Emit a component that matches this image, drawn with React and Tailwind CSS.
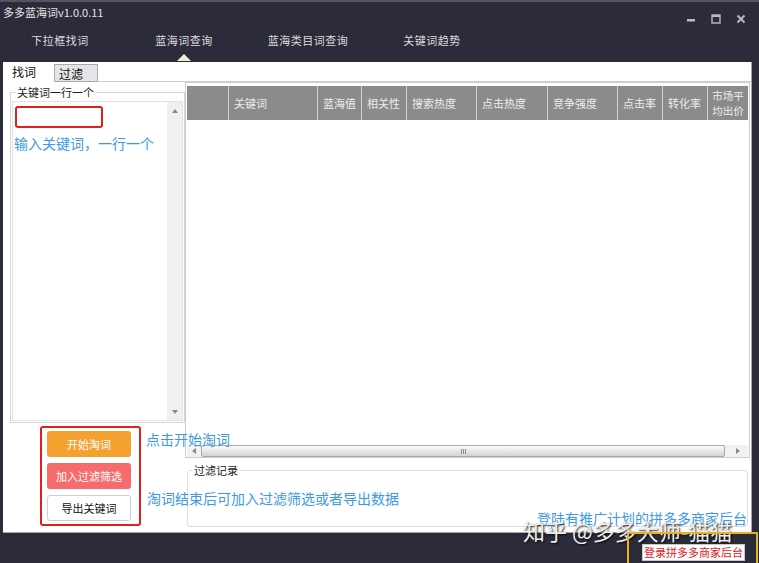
const navItems = ["下拉框找词", "蓝海词查询", "蓝海类目词查询", "关键词趋势"];

const tableColumns = [
  { label: "", width: "w-[42px]" },
  { label: "关键词", width: "w-[89px]" },
  { label: "蓝海值", width: "w-[44px]" },
  { label: "相关性", width: "w-[45px]" },
  { label: "搜索热度", width: "w-[70px]" },
  { label: "点击热度", width: "w-[71px]" },
  { label: "竞争强度", width: "w-[70px]" },
  { label: "点击率", width: "w-[45px]" },
  { label: "转化率", width: "w-[45px]" },
];

const Arrow = ({ dir }) => {
  const points = {
    up: "0,4 3,0 6,4",
    down: "0,0 3,4 6,0",
    left: "4,0 0,3 4,6",
    right: "0,0 4,3 0,6",
  }[dir];
  const size = dir === "up" || dir === "down" ? { w: 6, h: 4 } : { w: 4, h: 6 };

  return (
    <svg width={size.w} height={size.h} viewBox={`0 0 ${size.w} ${size.h}`}>
      <polygon points={points} fill="#8a8a8a" />
    </svg>
  );
};

const TitleBar = () => (
  <div className="flex h-[24px] justify-between">
    <div className="pl-[3px] pt-[3px] text-[11px] leading-[14px] text-[#e4e4e4]">
      多多蓝海词v1.0.0.11
    </div>

    <div className="mt-[12px] flex gap-[15px] pr-[13px]">
      <svg width="10" height="10" viewBox="0 0 10 10">
        <rect x="1" y="5" width="8" height="2.5" fill="#b9b9c2" />
      </svg>
      <svg width="10" height="10" viewBox="0 0 10 10">
        <rect x="1" y="1" width="8" height="8" fill="none" stroke="#b9b9c2" strokeWidth="1.4" />
        <rect x="1" y="1" width="8" height="2" fill="#b9b9c2" />
      </svg>
      <svg width="10" height="10" viewBox="0 0 10 10">
        <path d="M1.5 1.5 L8.5 8.5 M8.5 1.5 L1.5 8.5" stroke="#b9b9c2" strokeWidth="2" />
      </svg>
    </div>
  </div>
);

const NavBar = () => (
  <div className="ml-[-2px] flex h-[36px]">
    {navItems.map((item, index) => (
      <div key={item} className="flex w-[124px] flex-col items-center pt-[6px]">
        <span className="text-[11px] leading-[16px] tracking-[0.5px] text-[#dcdcdc]">
          {item}
        </span>
        {index === 1 && (
          <svg className="mt-[6px]" width="14" height="7" viewBox="0 0 14 7">
            <polygon points="0,7 7,0 14,7" fill="#f3edd3" />
          </svg>
        )}
      </div>
    ))}
  </div>
);

const KeywordPanel = () => (
  <div className="flex w-[182px] shrink-0 flex-col">
    <fieldset className="ml-[7px] mt-[3px] w-[175px] border border-[#d6d6d6] px-[1px] pb-[1px]">
      <legend className="ml-[4px] px-[1px] text-[11px] leading-[14px] text-[#222]">
        关键词一行一个
      </legend>

      <div className="mt-[2px] flex h-[320px] w-[171px] border border-[#e2e2e2] bg-white">
        <div className="flex-1 pl-[1px]">
          <div className="ml-[1px] mt-[4px] h-[22px] w-[88px] rounded-[3px] border-2 border-[#e0201c]" />
          <div className="mt-[5px] whitespace-nowrap text-[14px] leading-[20px] text-[#3d9ae2]">
            输入关键词，一行一个
          </div>
        </div>

        <div className="flex w-[15px] flex-col items-center justify-between bg-[#f0f0f0] pb-[6px] pt-[7px]">
          <Arrow dir="up" />
          <Arrow dir="down" />
        </div>
      </div>
    </fieldset>

    <div className="ml-[37px] mt-[3px] flex h-[100px] w-[101px] flex-col gap-[6px] rounded-[3px] border-2 border-[#e0201c] pl-[5px] pt-[3px]">
      <button className="h-[26px] w-[84px] rounded-[3px] bg-[#f4a12f] text-[11px] text-white">
        开始淘词
      </button>
      <button className="h-[26px] w-[84px] rounded-[3px] bg-[#f66c6c] text-[11px] text-white">
        加入过滤筛选
      </button>
      <button className="h-[26px] w-[84px] rounded-[3px] border border-[#cfcfcf] bg-white text-[11px] text-[#111]">
        导出关键词
      </button>
    </div>
  </div>
);

const ResultTable = () => (
  <div className="flex h-[376px] w-[565px] flex-col border border-[#cdcdcd] pl-[1px] pt-[3px]">
    <div className="flex h-[34px] w-[561px] bg-[#8b8b8b] text-[11px] text-[#ededed]">
      {tableColumns.map((col, index) => (
        <div
          key={index}
          className={`${col.width} flex shrink-0 items-center border-r border-[#d2d2d2] pl-[5px]`}
        >
          {col.label}
        </div>
      ))}
      <div className="flex w-[40px] shrink-0 flex-col items-center justify-center text-[10.5px] leading-[15px]">
        <span>市场平</span>
        <span>均出价</span>
      </div>
    </div>

    <div className="flex-1" />

    <div className="flex h-[12px] w-[561px] bg-[#f2f2f2]">
      <div className="flex w-[14px] items-center justify-center">
        <Arrow dir="left" />
      </div>
      <div className="flex w-[524px] items-center justify-center gap-[1px] rounded-[2px] border border-[#a9a9a9] bg-linear-to-b from-[#fbfbfb] to-[#d3d3d3]">
        <span className="h-[5px] w-[1px] bg-[#8a8a8a]" />
        <span className="h-[5px] w-[1px] bg-[#8a8a8a]" />
        <span className="h-[5px] w-[1px] bg-[#8a8a8a]" />
      </div>
      <div className="flex flex-1 items-center justify-center pl-[2px]">
        <Arrow dir="right" />
      </div>
    </div>
  </div>
);

const FilterRecord = () => (
  <fieldset className="ml-[2px] mt-[5px] h-[64px] w-[561px] rounded-[3px] border border-[#dedede]">
    <legend className="ml-[5px] px-[1px] text-[11px] leading-[14px] text-[#222]">过滤记录</legend>
  </fieldset>
);

export default function App() {
  return (
    <div className="relative h-[563px] w-[759px] overflow-hidden border-t-2 border-[#555463] bg-[#2c2b3a] font-['Noto_Sans_CJK_SC',sans-serif]">
      <TitleBar />
      <NavBar />

      <div className="ml-[3px] flex h-[471px] w-[749px] flex-col border-b border-r border-[#a5a5ad] bg-white">
        <div className="flex h-[20px] items-end pl-[5px]">
          <div className="h-[20px] w-[42px] pl-[4px] pt-[2px] text-[12px] leading-[16px] text-[#111]">
            找词
          </div>
          <div className="ml-[4px] h-[18px] w-[44px] border border-[#a9a9a9] bg-[#e5e5e5] pl-[4px] pt-[1px] text-[12px] leading-[16px] text-[#111]">
            过滤
          </div>
          <div className="h-full flex-1 border-b border-[#cfcfcf]" />
        </div>

        <div className="flex flex-1">
          <KeywordPanel />
          <div className="flex w-[566px] flex-col">
            <ResultTable />
            <FilterRecord />
          </div>
        </div>
      </div>

      <div className="absolute left-[146px] top-[428px] text-[14px] leading-[18px] text-[#3d9ae2]">
        点击开始淘词
      </div>
      <div className="absolute left-[147px] top-[487px] text-[14px] leading-[18px] text-[#3d9ae2]">
        淘词结束后可加入过滤筛选或者导出数据
      </div>
      <div className="absolute left-[537px] top-[507px] text-[14px] leading-[18px] text-[#3d9ae2]">
        登陆有推广计划的拼多多商家后台
      </div>
      <div className="absolute left-[523px] top-[515px] whitespace-pre text-[22px] leading-[26px] text-[#f0f0f0] [text-shadow:1px_1px_2px_rgba(0,0,0,0.9)]">
        知乎 @多多大师-猫猫
      </div>

      <div className="absolute left-[627px] top-[530px] flex h-[40px] w-[131px] items-start border-2 border-[#e6b21f] pl-[13px] pt-[10px]">
        <button className="h-[17px] w-[103px] border border-[#c8c8c8] bg-white text-[11px] leading-[15px] text-[#e0201c]">
          登录拼多多商家后台
        </button>
      </div>
    </div>
  );
}
